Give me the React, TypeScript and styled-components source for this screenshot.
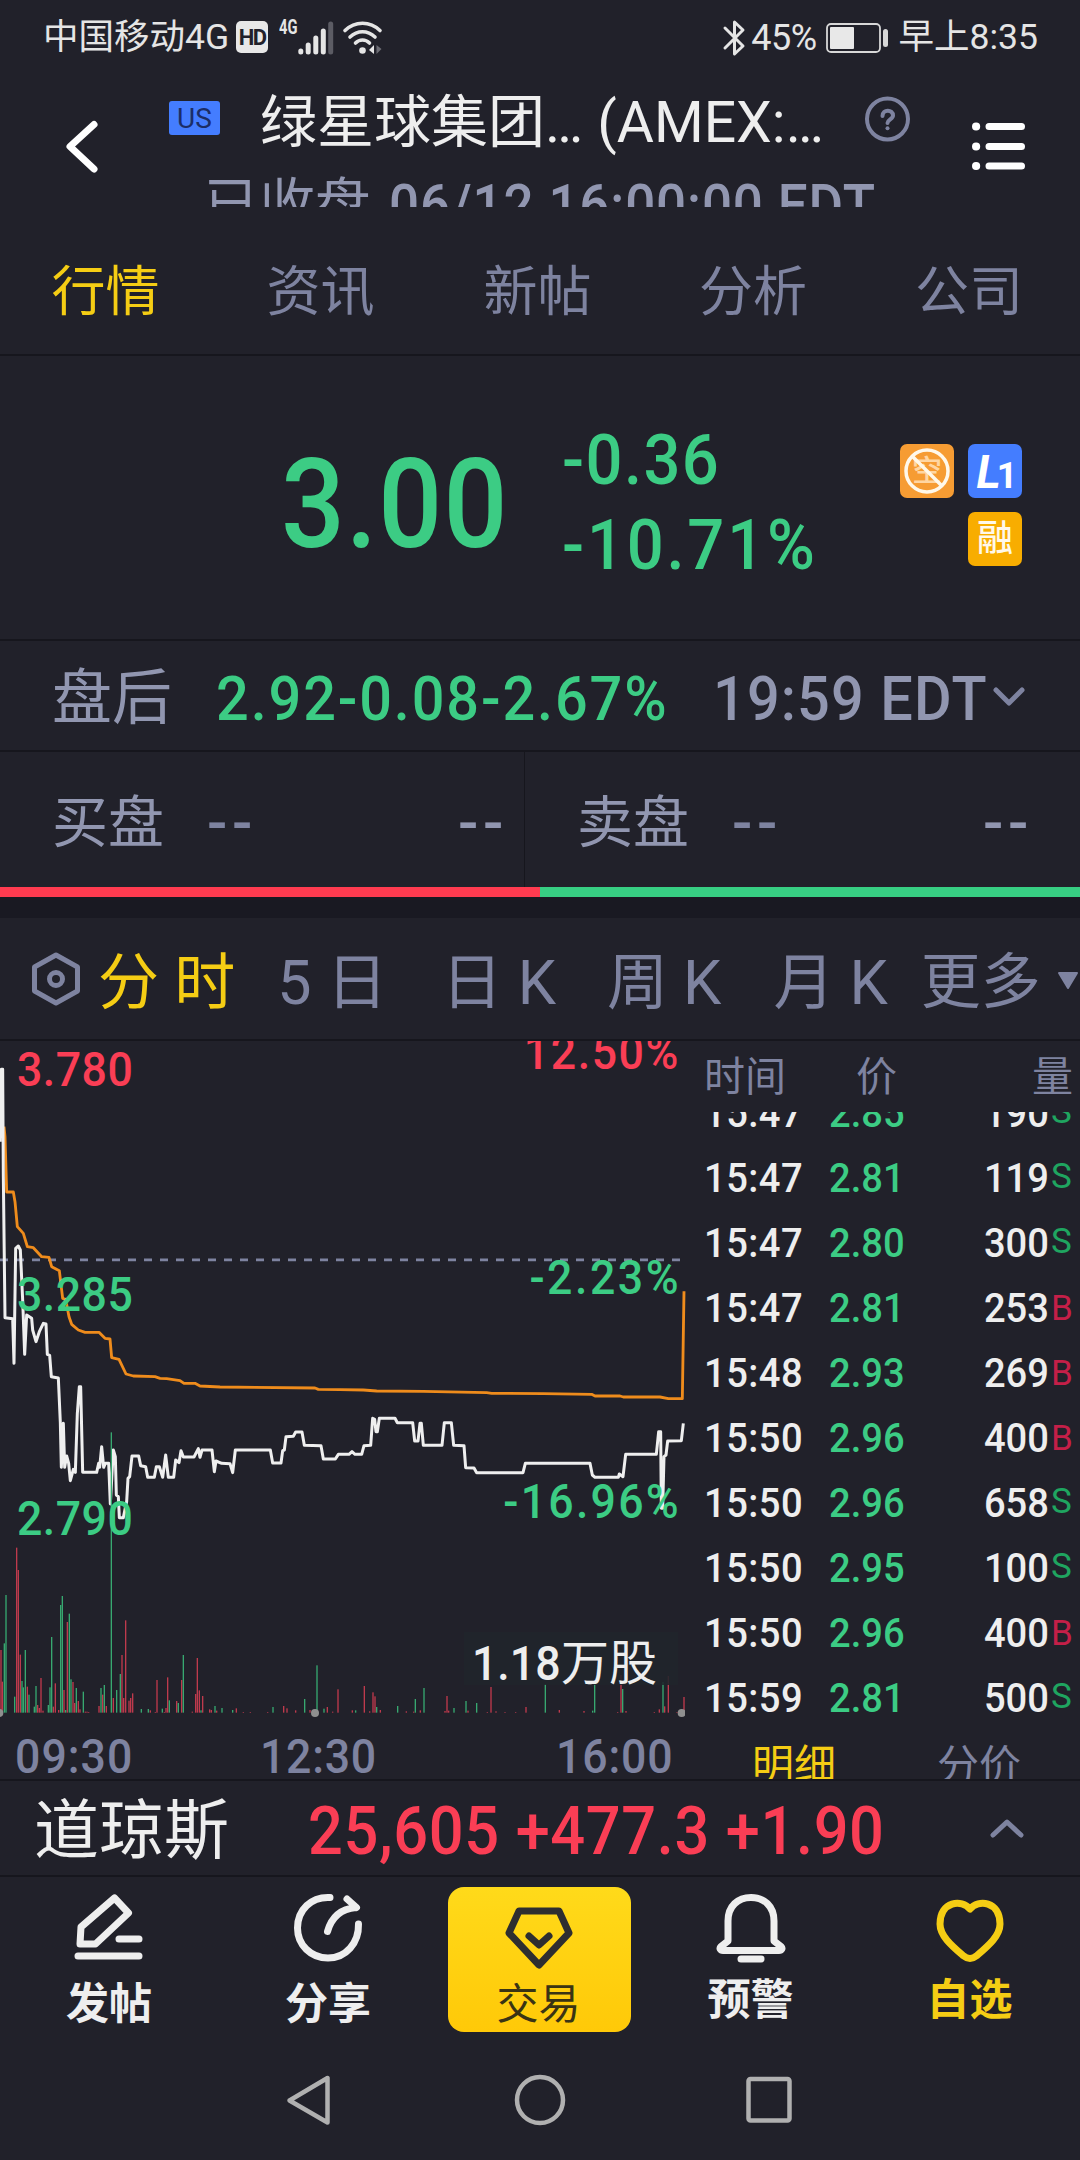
import React from 'react';
import styled, { createGlobalStyle } from 'styled-components';

const c = {
  bg: '#21212a',
  line: '#16161d',
  gap: '#191922',
  white: '#eeeeee',
  muted: '#7e83a0',
  label: '#9196b0',
  green: '#3ccc84',
  red: '#fa3e55',
  yellow: '#f5cd14',
  orange: '#ef8c1c',
};

const Global = createGlobalStyle`
  html, body { margin: 0; background: ${c.bg}; }
  * { box-sizing: border-box; }
`;

const Page = styled.div`
  width: 1080px;
  height: 2160px;
  display: flex;
  flex-direction: column;
  overflow: hidden;
  background: ${c.bg};
  color: ${c.white};
  font-family: Roboto, 'Noto Sans CJK SC', sans-serif;
  white-space: nowrap;
`;

interface TxtProps {
  $size: number;
  $color?: string;
  $weight?: number;
  $ls?: number;
  $ml?: number;
  $w?: number;
}
const Txt = styled.span<TxtProps>`
  display: block;
  flex: none;
  font-size: ${(p) => p.$size}px;
  line-height: ${(p) => p.$size}px;
  font-weight: ${(p) => p.$weight ?? 400};
  letter-spacing: ${(p) => p.$ls ?? 0}px;
  margin-left: ${(p) => p.$ml ?? 0}px;
  color: ${(p) => p.$color ?? 'inherit'};
  ${(p) => (p.$w ? `width: ${p.$w}px;` : '')}
  white-space: pre;
`;

/* Slightly condensed figures */
const Num = styled(Txt)<{ $sx?: number; $from?: string }>`
  font-weight: ${(p) => p.$weight ?? 500};
  transform: scaleX(${(p) => p.$sx ?? 0.93});
  transform-origin: ${(p) => p.$from ?? 'left'} center;
`;

const Icon = styled.svg<{ $ml?: number }>`
  display: block;
  flex: none;
  overflow: visible;
  margin-left: ${(p) => p.$ml ?? 0}px;
`;

/* Status bar */
const StatusBar = styled.div`
  flex: none;
  height: 76px;
  display: flex;
  align-items: center;
  justify-content: space-between;
  padding: 0 42px 0 43px;
  color: #e5e5e5;
`;
const Group = styled.div`
  display: flex;
  align-items: center;
`;
const HdBadge = styled.div`
  width: 32px;
  height: 32px;
  margin: 0 0 2px 7px;
  border-radius: 5px;
  background: #e8e8e8;
  color: ${c.bg};
  font: 700 22px/33px Roboto, sans-serif;
  letter-spacing: -1.4px;
  text-align: center;
`;
const NetTag = styled.span`
  align-self: flex-start;
  margin: -3px 0 0 11px;
  width: 19px;
  font: 700 21px/21px Roboto, sans-serif;
  transform: scaleX(0.7);
  transform-origin: left;
`;

/* Header */
const Header = styled.header`
  flex: none;
  height: 131px;
  display: flex;
  overflow: hidden;
`;
const BackButton = styled.div`
  width: 169px;
  padding: 44px 0 0 64px;
`;
const TitleBlock = styled.div`
  width: 743px;
`;
const TitleRow = styled.div`
  height: 90px;
  padding-top: 3px;
  display: flex;
  align-items: center;
`;
const MarketBadge = styled.div`
  width: 51px;
  height: 34px;
  margin-bottom: 9px;
  border-radius: 3px;
  background: #447dff;
  color: #1b2d66;
  font: 400 28px/35px Roboto, sans-serif;
  text-align: center;
`;
const SubRow = styled.div`
  height: 71px;
  display: flex;
  align-items: center;
  padding: 8px 0 0 35px;
  color: ${c.label};
`;
const MenuButton = styled.div`
  padding: 44px 0 0 60px;
`;

/* Section tabs */
const Tabs = styled.nav`
  flex: none;
  height: 149px;
  padding: 24px 3px 0 0;
  border-bottom: 2px solid ${c.line};
  display: grid;
  grid-template-columns: 211px 219px 215px repeat(2, 216px);
  align-items: center;
  justify-items: center;
`;

/* Price */
const PriceBlock = styled.section`
  flex: none;
  height: 285px;
  border-bottom: 2px solid ${c.line};
  display: flex;
  align-items: flex-start;
`;
const Price = styled.div`
  margin: 86px 0 0 281px;
  width: 279px;
`;
const Changes = styled.div`
  width: 340px;
  padding: 69px 0 0 2px;
  display: flex;
  flex-direction: column;
  gap: 15px;
`;
const Badges = styled.div`
  width: 122px;
  padding-top: 88px;
  display: flex;
  flex-wrap: wrap;
  justify-content: flex-end;
  gap: 14px;
`;
const Badge = styled.div<{ $bg: string; $align?: string }>`
  position: relative;
  width: 54px;
  height: 54px;
  border-radius: 7px;
  background: ${(p) => p.$bg};
  color: #fff8ea;
  display: flex;
  align-items: ${(p) => p.$align ?? 'center'};
  justify-content: center;
`;
const LevelText = styled.b<{ $size: number }>`
  font-size: ${(p) => p.$size}px;
  line-height: 56px;
  font-style: ${(p) => (p.$size > 40 ? 'italic' : 'normal')};
  font-weight: 700;
  letter-spacing: -4px;
  color: #fff;
`;
const Overlay = styled.svg`
  position: absolute;
  inset: 0;
`;

/* After hours and order book */
const AfterHours = styled.section`
  flex: none;
  height: 111px;
  border-bottom: 2px solid ${c.line};
  display: flex;
  align-items: center;
  padding: 6px 0 0 52px;
  color: ${c.label};
`;
const Book = styled.section`
  flex: none;
  height: 135px;
  display: grid;
  grid-template-columns: 525px 555px;
  color: ${c.label};
`;
const BookSide = styled.div`
  display: flex;
  align-items: center;
  padding: 7px 0 0 52px;
  border-right: 1px solid ${c.line};
  &:last-child { border-right: 0; }
`;
const RatioBar = styled.div`
  flex: none;
  height: 10px;
  background: linear-gradient(90deg, #ff3b50 50%, #37ce83 50%);
`;
const Gap = styled.div`
  flex: none;
  height: 21px;
  background: ${c.gap};
`;

/* Periods */
const Periods = styled.nav`
  flex: none;
  height: 123px;
  border-bottom: 2px solid ${c.line};
  display: flex;
  align-items: center;
  padding: 9px 0 0 31px;
  color: ${c.muted};
`;

/* Chart + trades */
const Main = styled.section`
  flex: none;
  height: 738px;
  display: flex;
  overflow: hidden;
`;
const ChartPane = styled.div`
  position: relative;
  width: 690px;
  height: 738px;
  overflow: hidden;
`;
const ChartSvg = styled.svg`
  display: block;
`;
const ChartLabel = styled.span<{ $x?: number; $r?: number; $base: number; $color: string; $ls?: number }>`
  position: absolute;
  ${(p) => (p.$r !== undefined ? `right: ${p.$r}px;` : `left: ${p.$x}px;`)}
  top: ${(p) => p.$base - 40}px;
  font-size: 48px;
  line-height: 48px;
  font-weight: 500;
  letter-spacing: ${(p) => p.$ls ?? 0.5}px;
  color: ${(p) => p.$color};
  transform: scaleX(0.93);
  transform-origin: ${(p) => (p.$r !== undefined ? 'right' : 'left')} center;
`;
const VolumeTip = styled.div`
  position: absolute;
  left: 464px;
  top: 591px;
  width: 214px;
  height: 53px;
  padding: 10px 0 0 8px;
  background: rgba(32, 36, 43, 0.88);
  display: flex;
  align-items: center;
`;
const Trades = styled.div`
  width: 390px;
  display: flex;
  flex-direction: column;
`;
const TradeHead = styled.div`
  flex: none;
  height: 71px;
  display: grid;
  grid-template-columns: 150px 120px 99px;
  align-items: center;
  padding: 1px 0 0 14px;
  color: ${c.muted};
`;
const TradeList = styled.div`
  flex: none;
  height: 619px;
  display: flex;
  flex-direction: column;
  justify-content: flex-end;
  overflow: hidden;
`;
const TradeRow = styled.div`
  flex: none;
  height: 65px;
  display: grid;
  grid-template-columns: 125px 119px 101px 24px;
  align-items: center;
  padding-left: 14px;
`;
const SideMark = styled.span<{ $buy: boolean }>`
  padding-bottom: ${(p) => (p.$buy ? 1 : 4)}px;
  margin-left: 2px;
  font-size: 35px;
  line-height: 35px;
  color: ${(p) => (p.$buy ? '#c41f48' : '#1fa560')};
`;
const Right = styled.div`
  display: flex;
  justify-content: flex-end;
`;
const TradeTabs = styled.div`
  height: 48px;
  display: flex;
  padding: 14px 0 0 62px;
`;

/* Footer */
const Ticker = styled.section`
  flex: none;
  height: 98px;
  border-top: 2px solid ${c.line};
  border-bottom: 2px solid ${c.line};
  display: flex;
  align-items: center;
  padding: 7px 0 0 34px;
`;
const Actions = styled.nav`
  flex: none;
  height: 165px;
  display: grid;
  grid-template-columns: 218px 220px 204px 217px 221px;
  justify-items: center;
`;
const Action = styled.div<{ $lift?: boolean }>`
  display: flex;
  flex-direction: column;
  align-items: center;
  padding-top: 16px;
  gap: ${(p) => (p.$lift ? 16 : 20)}px;
`;
const TradeButton = styled.div`
  width: 183px;
  height: 145px;
  margin: 10px 1px 0 0;
  border-radius: 16px;
  background: linear-gradient(#ffda1a, #ffc908);
  color: #3a3414;
  display: flex;
  flex-direction: column;
  align-items: center;
  padding: 19px 2px 0 0;
  gap: 12px;
`;
const SystemNav = styled.div`
  height: 121px;
  padding: 33px 0 0 286px;
  display: flex;
`;

/* Intraday series, in thirds of a pixel */
const at = (dx: number, dy: number, pts: number[]) => {
  const out: string[] = [];
  for (let i = 0; i < pts.length; i += 2) out.push(`${pts[i] + dx},${pts[i + 1] + dy}`);
  return out.join(' ');
};
const priceLine = [
  at(0, -33, [0, 335, 4, 118, 8, 118, 10, 440, 15, 863, 38, 866, 42, 1000, 47, 655, 55, 648, 61, 660, 68, 810, 74, 973, 80, 855, 95, 865, 98, 900, 108, 935, 118, 905, 130, 880, 138, 882, 142, 973, 149, 976, 154, 1040, 175, 1044]),
  at(0, 1017, [181, 128, 184, 262, 190, 130, 194, 262, 200, 228, 206, 250, 211, 302, 220, 268, 226, 277, 232, 100, 238, 20, 242, 20, 248, 277, 290, 277, 296, 250, 299, 262, 305, 200, 311, 262, 316, 250, 326, 250, 331, 372, 340, 210, 346, 230, 349, 345, 355, 350, 358, 413, 370, 413, 380, 365, 384, 295, 389, 290, 396, 228, 416, 228, 422, 257, 437, 260, 443, 292, 463, 292, 469, 260, 478, 260, 488, 292, 497, 225, 505, 292, 521, 292, 527, 240, 537, 248, 543, 212, 550, 231, 582, 231, 595, 206, 600, 232, 606, 210, 636, 210, 643, 275, 648, 243, 665, 250, 690, 251, 698, 278, 706, 210, 811, 210, 818, 249, 843, 249, 848, 212, 853, 210, 858, 170, 880, 169, 887, 156, 906, 156, 913, 196, 963, 197, 970, 237, 1006, 237, 1015, 223]),
  at(1020, 1017, [27, 223, 36, 215, 45, 223, 65, 223, 72, 197, 92, 196, 98, 115, 104, 118, 108, 155, 112, 155, 118, 115, 165, 115, 172, 128, 218, 128, 224, 183, 234, 183, 240, 130, 244, 130, 250, 196, 306, 196, 313, 128, 334, 128, 341, 196, 372, 197, 377, 263, 402, 264, 410, 278, 549, 278, 556, 250, 750, 250, 757, 285, 765, 292, 835, 292, 838, 282, 849, 290, 857, 223, 949, 223, 956, 155, 962, 155, 964, 385, 968, 385, 972, 230, 978, 225, 983, 183, 1024, 182, 1030, 130]),
].join(' ');
const averageLine = [
  at(0, -33, [12, 290, 15, 320, 20, 486, 40, 486, 45, 515, 52, 590, 70, 610, 82, 650, 100, 653, 125, 680, 147, 682, 155, 710, 178, 722, 188, 805, 197, 808, 207, 860, 215, 883, 235, 900, 255, 907, 297, 907, 315, 925, 330, 927, 335, 983, 357, 988, 378, 1032, 400, 1038, 465, 1040, 480, 1045, 500, 1046, 540, 1052, 552, 1060, 585, 1060, 600, 1068, 660, 1071, 945, 1074, 955, 1078]),
  at(1020, -33, [0, 1079, 70, 1080, 110, 1083, 250, 1084, 440, 1088, 455, 1090, 610, 1091, 755, 1093, 765, 1098, 840, 1098, 850, 1101, 960, 1101, 985, 1106, 1027, 1106, 1032, 784]),
].join(' ');

const upBars: [number, number][] = [
  [3, 188], [7, 93], [50, 495], [55, 428], [61, 174], [82, 78], [113, 23], [118, 14], [123, 104], [129, 6], [160, 18], [166, 88], [176, 8], [192, 68], [202, 272], [219, 92], [224, 29], [235, 35], [240, 10], [256, 3], [261, 3], [266, 2], [297, 20], [308, 54], [319, 20], [340, 44], [366, 173], [371, 44], [377, 277], [387, 36], [392, 44], [398, 58], [451, 7], [466, 2], [471, 98], [493, 2], [498, 14], [503, 106], [530, 35], [545, 98], [577, 3], [587, 56], [592, 164], [598, 67], [608, 50], [629, 10], [634, 8], [650, 6], [709, 13], [730, 2], [751, 2], [803, 2], [851, 20], [861, 13], [887, 7], [930, 8], [982, 17], [998, 3], [1014, 70],
  [1057, 7], [1093, 80], [1109, 4], [1119, 61], [1125, 49], [1141, 8], [1219, 4], [1241, 3], [1261, 7], [1335, 5], [1341, 50], [1346, 6], [1404, 6], [1462, 2], [1473, 77], [1488, 4], [1515, 2], [1547, 2], [1578, 17], [1678, 8], [1752, 5], [1853, 2], [1863, 113], [1878, 5], [1963, 2], [1978, 10], [1994, 19], [2005, 110], [2031, 2], [2052, 47],
];
const downBars: [number, number][] = [
  [13, 208], [18, 353], [44, 48], [66, 95], [70, 76], [76, 188], [87, 54], [103, 18], [108, 80], [145, 23], [150, 76], [155, 227], [182, 323], [187, 350], [197, 8], [208, 297], [213, 100], [229, 74], [250, 63], [303, 74], [313, 83], [334, 841], [350, 68], [361, 116], [424, 11], [445, 11], [487, 12], [508, 37], [535, 29], [550, 173], [603, 7], [645, 20], [666, 14], [698, 8], [819, 17], [914, 41], [951, 142], [972, 12],
  [1067, 7], [1130, 17], [1193, 20], [1246, 41], [1272, 74], [1362, 14], [1398, 35], [1430, 29], [1636, 86], [1778, 6], [1784, 90], [1868, 71], [1989, 92],
];

const Chart = () => (
  <ChartSvg width="690" height="738" viewBox="0 0 2070 2214" fill="none">
    <path d="M0 656.5H2040" stroke={c.muted} strokeWidth="8" strokeDasharray="24 24" />
    <polyline points={averageLine} stroke={c.orange} strokeWidth="8.5" strokeLinejoin="round" />
    <polyline points={priceLine} stroke="#efefef" strokeWidth="9" strokeLinejoin="round" />
    {upBars.map(([x, h]) => (
      <rect key={x} x={x - 2} y={2015 - h} width="4" height={h} fill="#bf3a4d" />
    ))}
    {downBars.map(([x, h]) => (
      <rect key={x} x={x - 2} y={2015 - h} width="4" height={h} fill="#37a870" />
    ))}
    {[-2, 945, 2045].map((x) => (
      <circle key={x} cx={x} cy="2016" r="12" fill="#8f8f8f" />
    ))}
    <rect x="2055" y="1990" width="15" height="50" fill={c.bg} />
  </ChartSvg>
);

const trades: [string, string, string, string][] = [
  ['15:47', '2.85', '190', 'S'],
  ['15:47', '2.81', '119', 'S'],
  ['15:47', '2.80', '300', 'S'],
  ['15:47', '2.81', '253', 'B'],
  ['15:48', '2.93', '269', 'B'],
  ['15:50', '2.96', '400', 'B'],
  ['15:50', '2.96', '658', 'S'],
  ['15:50', '2.95', '100', 'S'],
  ['15:50', '2.96', '400', 'B'],
  ['15:59', '2.81', '500', 'S'],
];

export default function App() {
  return (
    <Page>
      <Global />
      <StatusBar>
        <Group>
          <Txt $size={35.5}>中国移动4G</Txt>
          <HdBadge>HD</HdBadge>
          <NetTag>4G</NetTag>
          <Icon width="36" height="34" viewBox="0 0 36 34" strokeWidth="5" strokeLinecap="round" stroke="#e5e5e5">
            <path d="M2.8 30v1M10.2 24v7M17.8 17v14M25.3 10v21" />
            <path d="M32.7 3v28" stroke="#5c5c64" />
          </Icon>
          <Icon $ml={9} width="40" height="34" viewBox="0 0 40 34" fill="none" stroke="#e5e5e5" strokeWidth="3.6" strokeLinecap="round">
            <path d="M2 9.5C12-.2 27-.2 37 9.5M7 16c7.500-7 17.500-7 25 0M12.500 22c4-4 10-4 14 0" />
            <circle cx="19.500" cy="29.500" r="3.300" fill="#e5e5e5" stroke="none" />
            <path d="M31 24v9l-5-4z" fill="#e5e5e5" stroke="none" />
            <path d="M33.500 24v9l5-5z" fill="#6c6c74" stroke="none" />
          </Icon>
        </Group>
        <Group>
          <Icon width="22" height="36" viewBox="0 0 22 36" fill="none" stroke="#e5e5e5" strokeWidth="3" strokeLinejoin="round" strokeLinecap="round">
            <path d="M2 8l18 18-8.500 8V2l8.500 8L2 28" />
          </Icon>
          <Txt $size={36} $ml={6} $ls={-0.5}>45%</Txt>
          <Icon $ml={9} width="63" height="30" viewBox="0 0 63 30">
            <rect x="1" y="1" width="53" height="28" rx="4" fill="none" stroke="#d8d8d8" strokeWidth="1.800" />
            <rect x="4" y="4" width="24" height="22" rx="1" fill="#e8e8e8" />
            <rect x="57" y="6" width="5" height="18" rx="2.500" fill="#d8d8d8" />
          </Icon>
          <Txt $size={35.5} $ml={10}>早上8:35</Txt>
        </Group>
      </StatusBar>

      <Header>
        <BackButton>
          <Icon width="36" height="54" viewBox="0 0 36 54" fill="none" stroke="#fff" strokeWidth="7" strokeLinecap="round" strokeLinejoin="round">
            <path d="M30 4.500L6 26.500L30 49" />
          </Icon>
        </BackButton>
        <TitleBlock>
          <TitleRow>
            <MarketBadge>US</MarketBadge>
            <Txt $size={57} $ml={40} $w={588}>绿星球集团… (AMEX:…</Txt>
            <Icon $ml={17} width="46" height="46" viewBox="0 0 46 46" fill="none" stroke={c.muted} strokeWidth="4" strokeLinecap="round">
              <circle cx="22.500" cy="19" r="20.500" />
              <path d="M17.500 16c0-7 10.500-7 10.500-.5 0 3.700-5.500 4-5.500 7.500" />
              <path d="M22.500 28.200v.1" />
            </Icon>
          </TitleRow>
          <SubRow>
            <Txt $size={55.5}>已收盘</Txt>
            <Num $size={57} $ml={18} $ls={0.9}>06/12 16:00:00 EDT</Num>
          </SubRow>
        </TitleBlock>
        <MenuButton>
          <Icon width="54" height="54" viewBox="0 0 54 54" stroke="#fff" strokeWidth="7" strokeLinecap="round">
            <path d="M17 6.500H49.500M17 26.500H49.500M17 46H49.500" />
            <path d="M4 6.500h.2M4 26.500h.2M4 46h.2" strokeWidth="8" />
          </Icon>
        </MenuButton>
      </Header>

      <Tabs>
        {['行情', '资讯', '新帖', '分析', '公司'].map((t, i) => (
          <Txt key={t} $size={54} $color={i === 0 ? c.yellow : c.muted}>{t}</Txt>
        ))}
      </Tabs>

      <PriceBlock>
        <Price>
          <Num $size={125} $sx={0.9} $ls={1.2} $color={c.green}>3.00</Num>
        </Price>
        <Changes>
          <Num $size={70} $ls={1.5} $color={c.green}>-0.36</Num>
          <Num $size={70} $ls={3} $color={c.green}>-10.71%</Num>
        </Changes>
        <Badges>
          <Badge $bg="#f69c33">
            <Txt $size={30} $color="#ffd6a2" $weight={500}>空</Txt>
            <Overlay width="54" height="54" viewBox="0 0 54 54" fill="none" stroke="#fff8ea" strokeWidth="3.5">
              <circle cx="27" cy="27" r="21" />
              <path d="M12 12L42 42" />
            </Overlay>
          </Badge>
          <Badge $bg="#447dff" $align="baseline">
            <LevelText $size={46}>L</LevelText>
            <LevelText $size={36}>1</LevelText>
          </Badge>
          <Badge $bg="#f8ad00">
            <Txt $size={36} $weight={500}>融</Txt>
          </Badge>
        </Badges>
      </PriceBlock>

      <AfterHours>
        <Txt $size={60} $w={164}>盘后</Txt>
        <Num $size={62} $ls={2} $color={c.green} $w={497}>2.92-0.08-2.67%</Num>
        <Num $size={62} $ls={1.2} $w={277}>19:59 EDT</Num>
        <Icon $ml={3} width="32" height="20" viewBox="0 0 32 20" fill="none" stroke={c.muted} strokeWidth="5" strokeLinecap="round" strokeLinejoin="round">
          <path d="M3 1L16 14L29 1" />
        </Icon>
      </AfterHours>
      <Book>
        {['买盘', '卖盘'].map((t) => (
          <BookSide key={t}>
            <Txt $size={56} $w={155}>{t}</Txt>
            <Txt $size={60} $weight={500} $ls={4.5} $w={251} $color={c.muted}>--</Txt>
            <Txt $size={60} $weight={500} $ls={4.5}>--</Txt>
          </BookSide>
        ))}
      </Book>
      <RatioBar />
      <Gap />

      <Periods>
        <Icon width="50" height="54" viewBox="0 0 50 54" fill="none" stroke={c.muted} strokeWidth="5" strokeLinejoin="round">
          <path d="M25 -1L46.500 11V35L25 47L3.500 35V11Z" />
          <circle cx="25" cy="23" r="6.500" />
        </Icon>
        <Txt $size={61} $ml={17} $color={c.yellow}>分 时</Txt>
        <Txt $size={61} $ml={42}>5 日</Txt>
        <Txt $size={61} $ml={54}>日 K</Txt>
        <Txt $size={61} $ml={51}>周 K</Txt>
        <Txt $size={61} $ml={52}>月 K</Txt>
        <Txt $size={60} $ml={33}>更多</Txt>
        <Icon $ml={16} width="22" height="18" viewBox="0 0 22 18">
          <path d="M2 -1H20L11 14Z" fill={c.muted} stroke={c.muted} strokeWidth="2" strokeLinejoin="round" />
        </Icon>
      </Periods>

      <Main>
        <ChartPane>
          <Chart />
          <ChartLabel $x={17} $base={45} $color={c.red}>3.780</ChartLabel>
          <ChartLabel $x={17} $base={270} $color={c.green}>3.285</ChartLabel>
          <ChartLabel $x={17} $base={494} $color={c.green}>2.790</ChartLabel>
          <ChartLabel $r={10} $base={28} $color={c.red} $ls={1.7}>12.50%</ChartLabel>
          <ChartLabel $r={9} $base={253} $color={c.green} $ls={2.7}>-2.23%</ChartLabel>
          <ChartLabel $r={9} $base={477} $color={c.green} $ls={2.4}>-16.96%</ChartLabel>
          <VolumeTip>
            <Num $size={48} $w={89}>1.18</Num>
            <Txt $size={48}>万股</Txt>
          </VolumeTip>
          <ChartLabel $x={15} $base={732} $color={c.muted} $ls={1.1}>09:30</ChartLabel>
          <ChartLabel $x={260} $base={732} $color={c.muted} $ls={0.8}>12:30</ChartLabel>
          <ChartLabel $x={556} $base={732} $color={c.muted} $ls={0.9}>16:00</ChartLabel>
        </ChartPane>
        <Trades>
          <TradeHead>
            <Txt $size={41}>时间</Txt>
            <Txt $size={41} $ml={2}>价</Txt>
            <Right><Txt $size={41}>量</Txt></Right>
          </TradeHead>
          <TradeList>
            {trades.map(([time, price, vol, side], i) => (
              <TradeRow key={i}>
                <Num $size={41} $ls={0.5}>{time}</Num>
                <Num $size={41} $color={c.green}>{price}</Num>
                <Right><Num $size={41} $from="right">{vol}</Num></Right>
                <SideMark $buy={side === 'B'}>{side}</SideMark>
              </TradeRow>
            ))}
          </TradeList>
          <TradeTabs>
            <Txt $size={42} $color={c.yellow} $w={185}>明细</Txt>
            <Txt $size={42} $color={c.muted}>分价</Txt>
          </TradeTabs>
        </Trades>
      </Main>

      <Ticker>
        <Txt $size={65} $w={274}>道琼斯</Txt>
        <Num $size={66} $ls={0.65} $color={c.red} $w={681}>25,605 +477.3 +1.90</Num>
        <Icon width="36" height="22" viewBox="0 0 36 22" fill="none" stroke={c.muted} strokeWidth="5" strokeLinecap="round" strokeLinejoin="round">
          <path d="M4 14L18 1L32 14" />
        </Icon>
      </Ticker>

      <Actions>
        <Action>
          <Icon width="70" height="70" viewBox="0 0 70 70" fill="none" stroke={c.white} strokeWidth="7" strokeLinecap="round" strokeLinejoin="round">
            <path d="M40.500 5L54.500 20L21.500 51H6L7 34Z" />
            <path d="M45 46H65M4 63H65" />
          </Icon>
          <Txt $size={43} $weight={700}>发帖</Txt>
        </Action>
        <Action>
          <Icon width="70" height="70" viewBox="0 0 70 70" fill="none" stroke={c.white} strokeWidth="7" strokeLinecap="round" strokeLinejoin="round">
            <path d="M37 4.500C18 3.500 4.500 17 4.500 35C4.500 52 18 65 35 65C53 65 66 50 65.500 31" />
            <path d="M34.500 38.500C38 26 46 16 63 14.500M54 6L63.500 14.500" />
          </Icon>
          <Txt $size={43} $weight={700}>分享</Txt>
        </Action>
        <TradeButton>
          <Icon width="70" height="66" viewBox="0 0 70 66" fill="none" stroke="#2e2e30" strokeWidth="7" strokeLinecap="round" strokeLinejoin="round">
            <path d="M15 5H55L65 27L35 59L5 27Z" />
            <path d="M25 30L35 39L45 30" />
          </Icon>
          <Txt $size={42}>交易</Txt>
        </TradeButton>
        <Action $lift>
          <Icon width="70" height="70" viewBox="0 0 70 70" fill="none" stroke={c.white} strokeWidth="7" strokeLinecap="round" strokeLinejoin="round">
            <path d="M12 48V28C12 13 22 4.500 35 4.500S58 13 58 28V48L65 53.500C67 55.500 65.500 57.500 63 57.500H7C4.500 57.500 3 55.500 5 53.500Z" />
            <path d="M25 66H45" />
          </Icon>
          <Txt $size={43} $weight={700}>预警</Txt>
        </Action>
        <Action $lift>
          <Icon width="70" height="70" viewBox="0 0 70 70" fill="none" stroke={c.yellow} strokeWidth="7" strokeLinejoin="round">
            <path d="M35 16C27 6 5 8 5 31C5 43 17 53 28 62.500C33 66.500 37 66.500 42 62.500C53 53 65 43 65 31C65 8 43 6 35 16Z" />
          </Icon>
          <Txt $size={43} $weight={700} $color={c.yellow}>自选</Txt>
        </Action>
      </Actions>

      <SystemNav>
        <Icon width="44" height="52" viewBox="0 0 44 52" fill="none" stroke="#b0b0b0" strokeWidth="4.500" strokeLinejoin="round">
          <path d="M41.500 3V47.500L3.500 25.500Z" />
        </Icon>
        <Icon $ml={185} width="50" height="52" viewBox="0 0 50 52" fill="none" stroke="#b0b0b0" strokeWidth="4.500">
          <circle cx="25" cy="25" r="23" />
        </Icon>
        <Icon $ml={181} width="48" height="52" viewBox="0 0 48 52" fill="none" stroke="#b0b0b0" strokeWidth="4.500">
          <rect x="2.500" y="4" width="41" height="41.500" rx="2" />
        </Icon>
      </SystemNav>
    </Page>
  );
}
